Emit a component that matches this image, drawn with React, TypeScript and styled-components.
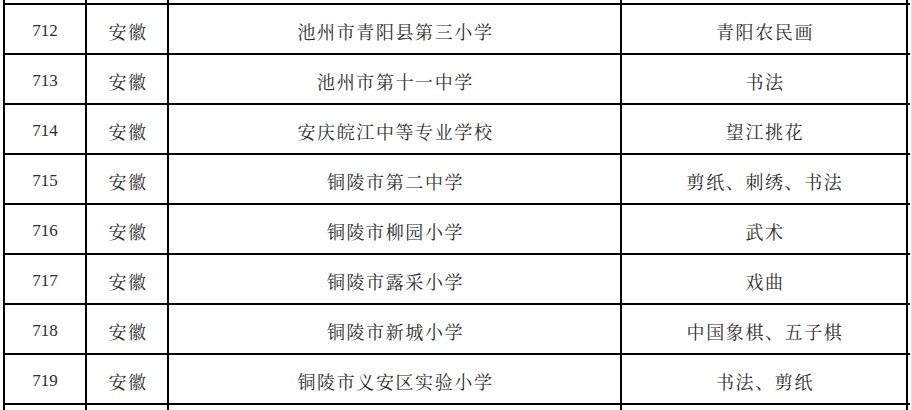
import { styled, createGlobalStyle } from 'styled-components';

const GlobalStyle = createGlobalStyle`
  html, body {
    margin: 0;
    padding: 0;
    background: #ffffff;
  }
  body {
    font-family: "Noto Serif CJK SC", "Noto Sans CJK SC", "Liberation Serif", serif;
    color: #2e2e2e;
  }
`;

const Page = styled.div`
  width: 912px;
  height: 410px;
  overflow: hidden;
  box-sizing: border-box;
  border-right: 1px solid #e2e2e2;
`;

const Table = styled.div`
  margin-left: 3px;
  width: 905px;
  border-left: 2px solid #000;
`;

const Row = styled.div<{ $h?: number }>`
  display: grid;
  grid-template-columns: 82px 82px 453px 286px;
  height: ${(p) => p.$h ?? 50}px;
  box-sizing: border-box;
  border-bottom: 2px solid #000;
`;

const Cell = styled.div<{ $num?: boolean }>`
  display: flex;
  align-items: center;
  justify-content: center;
  box-sizing: border-box;
  border-right: 2px solid #000;
  padding-top: 4px;
  padding-left: ${(p) => (p.$num ? 0 : 2)}px;
  font-family: ${(p) =>
    p.$num
      ? '"Liberation Serif", serif'
      : '"Noto Serif CJK SC", "Noto Sans CJK SC", sans-serif'};
  font-size: ${(p) => (p.$num ? 17 : 18)}px;
  letter-spacing: ${(p) => (p.$num ? 0 : 1.6)}px;
  white-space: nowrap;
`;

const rows = [
  ['712', '安徽', '池州市青阳县第三小学', '青阳农民画'],
  ['713', '安徽', '池州市第十一中学', '书法'],
  ['714', '安徽', '安庆皖江中等专业学校', '望江挑花'],
  ['715', '安徽', '铜陵市第二中学', '剪纸、刺绣、书法'],
  ['716', '安徽', '铜陵市柳园小学', '武术'],
  ['717', '安徽', '铜陵市露采小学', '戏曲'],
  ['718', '安徽', '铜陵市新城小学', '中国象棋、五子棋'],
  ['719', '安徽', '铜陵市义安区实验小学', '书法、剪纸'],
];

const Stub = ({ h, last }: { h: number; last?: boolean }) => (
  <Row $h={h} style={last ? { borderBottom: 'none' } : undefined}>
    <Cell />
    <Cell />
    <Cell />
    <Cell />
  </Row>
);

export default function App() {
  return (
    <>
      <GlobalStyle />
      <Page>
        <Table>
          <Stub h={5} />
          {rows.map(([no, prov, school, item]) => (
            <Row key={no}>
              <Cell $num>{no}</Cell>
              <Cell>{prov}</Cell>
              <Cell>{school}</Cell>
              <Cell>{item}</Cell>
            </Row>
          ))}
          <Stub h={20} last />
        </Table>
      </Page>
    </>
  );
}
